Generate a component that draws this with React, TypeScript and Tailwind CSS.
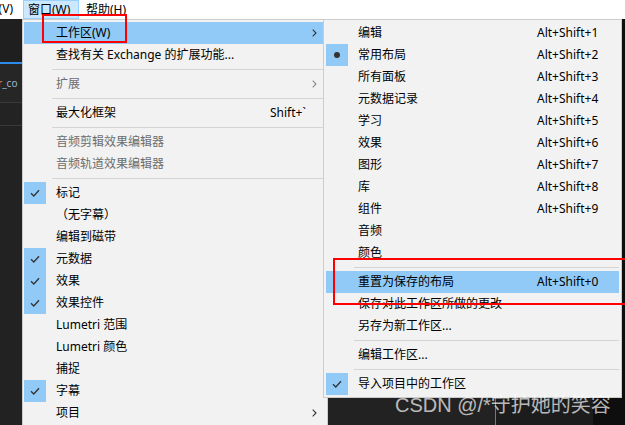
import React from 'react';

type Item = {
  sep?: boolean;
  label?: string;
  disabled?: boolean;
  arrow?: boolean;
  checked?: boolean;
  radio?: boolean;
  shortcut?: string;
  hl?: boolean;
};

const mainItems: Item[] = [
  { label: '工作区(W)', arrow: true, hl: true },
  { label: '查找有关 Exchange 的扩展功能...' },
  { sep: true },
  { label: '扩展', disabled: true, arrow: true },
  { sep: true },
  { label: '最大化框架', shortcut: 'Shift+`' },
  { sep: true },
  { label: '音频剪辑效果编辑器', disabled: true },
  { label: '音频轨道效果编辑器', disabled: true },
  { sep: true },
  { label: '标记', checked: true },
  { label: '（无字幕）' },
  { label: '编辑到磁带' },
  { label: '元数据', checked: true },
  { label: '效果', checked: true },
  { label: '效果控件', checked: true },
  { label: 'Lumetri 范围' },
  { label: 'Lumetri 颜色' },
  { label: '捕捉' },
  { label: '字幕', checked: true },
  { label: '项目', arrow: true },
];

const subItems: Item[] = [
  { label: '编辑', shortcut: 'Alt+Shift+1' },
  { label: '常用布局', shortcut: 'Alt+Shift+2', radio: true },
  { label: '所有面板', shortcut: 'Alt+Shift+3' },
  { label: '元数据记录', shortcut: 'Alt+Shift+4' },
  { label: '学习', shortcut: 'Alt+Shift+5' },
  { label: '效果', shortcut: 'Alt+Shift+6' },
  { label: '图形', shortcut: 'Alt+Shift+7' },
  { label: '库', shortcut: 'Alt+Shift+8' },
  { label: '组件', shortcut: 'Alt+Shift+9' },
  { label: '音频' },
  { label: '颜色' },
  { sep: true },
  { label: '重置为保存的布局', shortcut: 'Alt+Shift+0', hl: true },
  { label: '保存对此工作区所做的更改' },
  { label: '另存为新工作区...' },
  { sep: true },
  { label: '编辑工作区...' },
  { sep: true },
  { label: '导入项目中的工作区', checked: true },
];

const Check = () => (
  <svg width="10" height="8" viewBox="0 0 10 8" fill="none">
    <path d="M1 4.2 L3.8 7 L9 1.2" stroke="#333" strokeWidth="1.3" />
  </svg>
);

const Chevron = ({ color }: { color: string }) => (
  <svg width="5" height="8" viewBox="0 0 5 8" fill="none">
    <path d="M0.7 0.7 L4 4 L0.7 7.3" stroke={color} strokeWidth="1.1" />
  </svg>
);

function Row({ item, main }: { item: Item; main: boolean }) {
  if (item.sep) {
    return (
      <div className="h-[7px] flex items-center pl-[28px]">
        <div className="h-px w-full bg-[#d4d4d4]" />
      </div>
    );
  }
  return (
    <div
      className={`h-[22px] flex items-center ${item.hl ? 'bg-[#91c9f7]' : ''} ${
        item.disabled ? 'text-[#6d6d6d]' : 'text-black'
      }`}
    >
      <div
        className={`w-[22px] h-[22px] shrink-0 flex items-center justify-center ${
          item.checked || item.radio ? 'bg-[#91c9f7]' : ''
        }`}
      >
        {item.checked && <Check />}
        {item.radio && <div className="w-[6px] h-[6px] rounded-full bg-[#333]" />}
      </div>
      <div className="ml-[10px] flex-1 whitespace-nowrap">{item.label}</div>
      {main ? (
        <>
          <div className="w-[40px] whitespace-nowrap">{item.shortcut}</div>
          <div className="w-[13px] flex items-center pl-[2px]">
            {item.arrow && <Chevron color={item.disabled ? '#8a8a8a' : '#333'} />}
          </div>
        </>
      ) : (
        <div className="w-[82px] whitespace-nowrap">{item.shortcut}</div>
      )}
    </div>
  );
}

export default function App() {
  return (
    <div
      className="relative w-[625px] h-[425px] overflow-hidden bg-[#1e1e1e] text-[12px] leading-[22px]"
      style={{ fontFamily: '"Noto Sans", "Noto Sans CJK SC", sans-serif' }}
    >
      {/* menubar */}
      <div className="h-[19px] bg-white flex items-stretch leading-[18px]">
        <div className="w-[23px] overflow-hidden flex justify-end pr-[10px]">
          <span className="whitespace-nowrap shrink-0">视图(V)</span>
        </div>
        <div className="w-[56px] bg-[#cce8ff] border border-[#99d1ff] flex items-center pl-[4px]">
          <span className="whitespace-nowrap">窗口(W)</span>
        </div>
        <div className="pl-[7px] flex items-center">
          <span className="whitespace-nowrap">帮助(H)</span>
        </div>
      </div>

      {/* background application */}
      <div className="flex h-[406px]">
        <div className="w-[495px] flex flex-col">
          <div className="h-[43px] bg-[#1f1f1f]" />
          <div className="h-[2px] bg-[#2d8ceb]" />
          <div className="h-[38px] bg-[#262626] flex items-center overflow-hidden">
            <span className="text-[10px] leading-[12px] text-[#9ab7d1] whitespace-nowrap ml-[-2px]">
              <span className="text-[#d0944a]">r</span>_co
            </span>
          </div>
          <div className="h-px bg-[#3a3a3a]" />
          <div className="h-[22px] bg-[#232323]" />
          <div className="h-px bg-[#3a3a3a]" />
          <div className="flex-1 bg-[#222222]" />
        </div>
        <div className="w-px bg-[#3b86d6]" />
        <div className="w-[97px] bg-[#1c1c1c]" />
        <div className="flex-1 bg-[#0e0e0e]" />
      </div>

      {/* main menu */}
      <div className="absolute left-[22px] top-[19px] w-[306px] h-[420px] bg-[#f2f2f2] border border-[#cccccc] pl-px pr-[4px] pt-[2px]">
        {mainItems.map((it, i) => (
          <Row key={i} item={it} main />
        ))}
      </div>

      {/* submenu */}
      <div className="absolute left-[323px] top-[19px] w-[299px] h-[379px] bg-[#f2f2f2] border border-[#cccccc] px-[2px] pt-[2px]">
        {subItems.map((it, i) => (
          <Row key={i} item={it} main={false} />
        ))}
      </div>

      {/* red annotation boxes */}
      <div className="absolute left-[42px] top-[14px] w-[85px] h-[29px] border-2 border-[#ff0000]" />
      <div className="absolute left-[333px] top-[258px] w-[300px] h-[47px] border-2 border-[#ff0000]" />

      {/* watermark */}
      <div
        className="absolute left-[395px] top-[393px] text-[20px] leading-[24px] text-white/70 whitespace-nowrap"
        style={{ fontFamily: '"Liberation Sans", "Noto Sans CJK SC", sans-serif' }}
      >
        CSDN @/*守护她的笑容
      </div>
    </div>
  );
}
